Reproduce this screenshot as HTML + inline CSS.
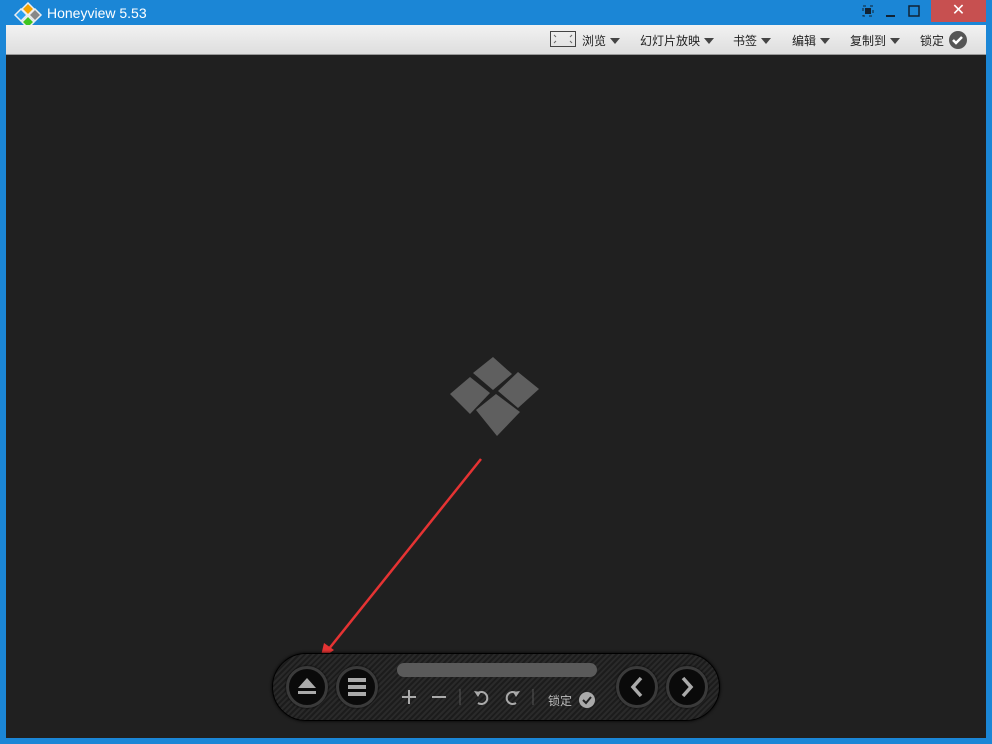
<!DOCTYPE html>
<html><head><meta charset="utf-8"><style>
*{margin:0;padding:0;box-sizing:border-box}
body{width:992px;height:744px;background:#1b86d6;position:relative;overflow:hidden;font-family:"Liberation Sans","Noto Sans CJK SC",sans-serif}
.title{position:absolute;left:47px;top:5px;color:#fff;font-size:14px}
.tb{position:absolute;left:6px;top:25px;width:980px;height:30px;background:linear-gradient(#f2f2f2,#dedede);border-bottom:1px solid #999}
.tb span{position:absolute;top:7px;font-size:12px;color:#222}
.tri{display:inline-block;width:0;height:0;border-left:5px solid transparent;border-right:5px solid transparent;border-top:6px solid #444;margin-left:4px;vertical-align:1px}
.main{position:absolute;left:6px;top:55px;width:980px;height:683px;background:#202020}
.close{position:absolute;left:931px;top:0;width:55px;height:22px;background:#c75050;color:#fff;text-align:center;font-size:16px;line-height:22px}
.panel{position:absolute;left:272px;top:653px;width:448px;height:68px;border-radius:34px;background:repeating-linear-gradient(135deg,#2a2a2a 0 2px,#1c1c1c 2px 4px);border:1px solid #000;box-shadow:0 0 3px #000}
.btn{position:absolute;top:12px;width:42px;height:42px;border-radius:50%;background:#0a0a0a;border:3px solid #3a3a3a;box-shadow:0 0 2px #000}
.bar{position:absolute;left:124px;top:9px;width:200px;height:14px;border-radius:7px;background:#5a5a5a}
</style></head><body>
<svg style="position:absolute;left:13px;top:2px" width="32" height="28" viewBox="0 0 32 28">
<polygon points="2,13 8,7 14,13 8,19" fill="#2a9ff0" stroke="#eee" stroke-width="1.5"/>
<polygon points="9,7 15,1 21,7 15,13" fill="#f5a300" stroke="#eee" stroke-width="1.5"/>
<polygon points="16,13 22,7 28,13 22,19" fill="#888" stroke="#eee" stroke-width="1.5"/>
<polygon points="9,20 15,14 21,20 15,26" fill="#3fc520" stroke="#eee" stroke-width="1.5"/>
</svg>
<div class="title">Honeyview 5.53</div>
<svg style="position:absolute;left:862px;top:5px" width="60" height="14"><rect x="1" y="1" width="10" height="10" fill="none" stroke="#123" stroke-dasharray="3 4"/><rect x="3" y="3" width="6" height="6" fill="#123"/><rect x="24" y="10" width="9" height="2" fill="#123"/><rect x="47" y="1" width="10" height="10" fill="none" stroke="#123" stroke-width="1.5"/></svg>
<div class="close">✕</div>
<div class="tb">
<svg style="position:absolute;left:544px;top:6px" width="26" height="16"><rect x="0.5" y="0.5" width="25" height="15" fill="none" stroke="#444"/><path d="M4 4l2 2M22 4l-2 2M4 12l2-2M22 12l-2-2" stroke="#666"/></svg>
<span style="left:576px">浏览<i class="tri"></i></span>
<span style="left:634px">幻灯片放映<i class="tri"></i></span>
<span style="left:727px">书签<i class="tri"></i></span>
<span style="left:786px">编辑<i class="tri"></i></span>
<span style="left:844px">复制到<i class="tri"></i></span>
<span style="left:914px">锁定</span>
<svg style="position:absolute;left:942px;top:5px" width="20" height="20"><circle cx="10" cy="10" r="9" fill="#555"/><path d="M5 10l3 3 6-6" stroke="#fff" stroke-width="2.5" fill="none"/></svg>
</div>
<div class="main"></div>
<svg style="position:absolute;left:0;top:0" width="992" height="744">
<g fill="#5f5f5f">
<polygon points="473,373 493,357 512,374 493,390"/>
<polygon points="450,394 470,377 490,393 470,414"/>
<polygon points="498,391 518,372 539,389 518,408"/>
<polygon points="476,410 496,394 520,412 497,436"/>
</g>
<line x1="481" y1="459" x2="328" y2="650" stroke="#e53333" stroke-width="2.5"/>
<polygon points="320,660 324,643 334,650" fill="#e53333"/>
</svg>
<div class="panel">
<div class="btn" style="left:13px"><svg width="36" height="36"><polygon points="18,9 27,19 9,19" fill="#aaa"/><rect x="9" y="22" width="18" height="3" fill="#aaa"/></svg></div>
<div class="btn" style="left:63px"><svg width="36" height="36"><rect x="9" y="9" width="18" height="4" fill="#aaa"/><rect x="9" y="16" width="18" height="4" fill="#aaa"/><rect x="9" y="23" width="18" height="4" fill="#aaa"/></svg></div>
<div class="bar"></div>
<svg style="position:absolute;left:120px;top:33px" width="200" height="22">
<path d="M16 3v14M9 10h14" stroke="#aaa" stroke-width="2"/>
<path d="M39 10h14" stroke="#aaa" stroke-width="2"/>
<path d="M67 2v16M140 2v16" stroke="#555"/>
<path d="M85 6a6 6 0 1 1 0 10" stroke="#aaa" stroke-width="2" fill="none"/><path d="M81 4l4 6 3-5z" fill="#aaa"/>
<path d="M123 6a6 6 0 1 0 0 10" stroke="#aaa" stroke-width="2" fill="none"/><path d="M127 4l-4 6-3-5z" fill="#aaa"/>
</svg>
<span style="position:absolute;left:275px;top:38px;font-size:12px;color:#bbb">锁定</span>
<svg style="position:absolute;left:305px;top:37px" width="18" height="18"><circle cx="9" cy="9" r="8" fill="#aaa"/><path d="M5 9l3 3 5-6" stroke="#222" stroke-width="2" fill="none"/></svg>
<div class="btn" style="left:343px"><svg width="36" height="36"><path d="M22 9l-8 9 8 9" stroke="#aaa" stroke-width="3.5" fill="none"/></svg></div>
<div class="btn" style="left:393px"><svg width="36" height="36"><path d="M14 9l8 9-8 9" stroke="#aaa" stroke-width="3.5" fill="none"/></svg></div>
</div>
</body></html>
